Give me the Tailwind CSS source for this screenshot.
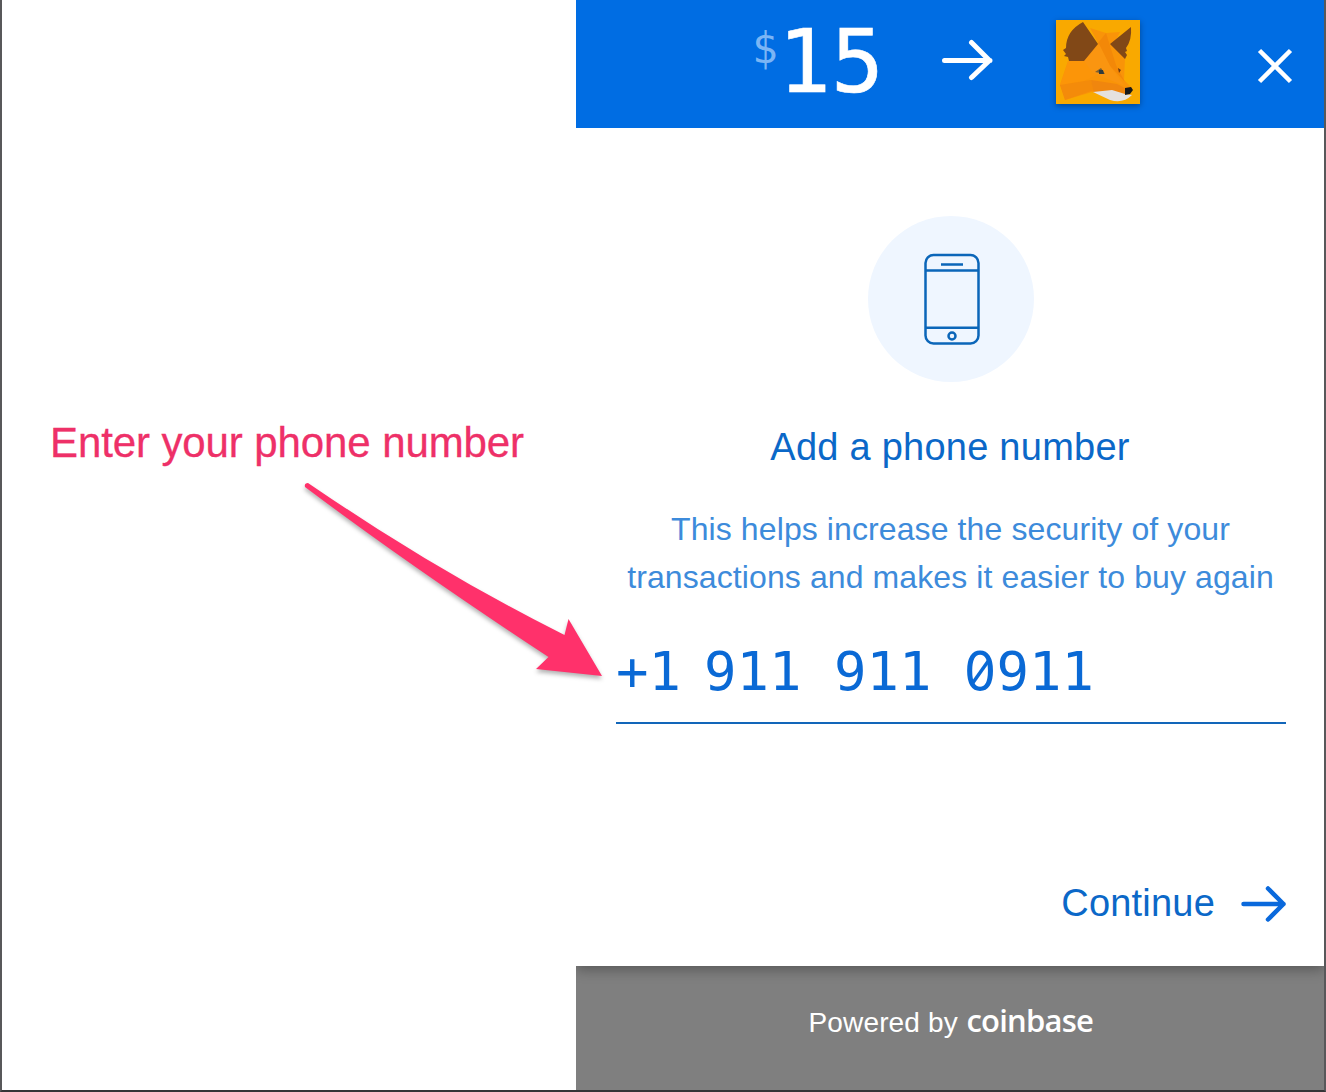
<!DOCTYPE html>
<html lang="en">
<head>
<meta charset="utf-8">
<title>Add a phone number</title>
<script src="https://cdn.jsdelivr.net/npm/@tailwindcss/browser@4"></script>
</head>
<body class="w-[1326px] h-[1092px] overflow-hidden bg-white font-['Liberation_Sans',Arial,sans-serif]">
<div class="relative flex w-full h-full border-x-2 border-b-2 border-[#58585a] border-b-[#353537]">
  <aside class="w-[574px] shrink-0 pt-[419px] pl-[48px]">
    <p class="text-[42px] leading-[48px] tracking-[-0.1px] text-[#ee3068] whitespace-nowrap [-webkit-text-stroke:0.3px_#ee3068]">Enter your phone number</p>
  </aside>

  <main class="flex flex-col w-[748px] shrink-0 bg-[#7f7f7f] overflow-hidden">
    <header class="relative z-10 flex h-32 shrink-0 bg-[#006de3] text-white font-['DejaVu_Sans_Mono',monospace]">
      <span class="w-[26px] ml-[176px] mt-[22px] text-[43px] leading-[52px] text-[#7bb5f5]">$</span>
      <span class="w-[106px] mt-[10px] text-[88px] leading-[104px] [-webkit-text-stroke:0.6px_white]">15</span>
      <svg class="ml-[57px] mt-[39px] w-[54px] h-[44px] shrink-0" viewBox="0 0 54 44" fill="none" stroke="currentColor" stroke-width="5" stroke-linecap="round" stroke-linejoin="round"><path d="M3.500 21.500H49M30.500 3.500L48.500 21.500L30.500 38.500"/></svg>
      <svg class="ml-[61px] mt-5 w-[84px] h-[84px] shrink-0 shadow-[0_2px_6px_rgba(0,0,0,0.35)]" viewBox="0 0 84 84">
        <path fill="#f9a900" d="M0 0h84v84H0z"/>
        <path fill="#f99408" d="M12 41L27 41L42 23L34 8L50 13L64 12L58 24L69 38L68 60L76 68L72 77L36 72L9 80L4 65Z"/>
        <path fill="#fc9508" d="M12 41L30 41L41 55L28 61L4 65Z"/>
        <path fill="#f38808" d="M42 23L50 13L60 45L69 62L54 46Z"/>
        <path fill="#fa9510" d="M28 41L43 24L54 46L69 66L54 60L37 53Z"/>
        <path fill="#f48b0a" d="M4 65L35 60L38 70L9 80Z"/>
        <path fill="#f0860e" d="M35 60L61 64L69 68L70 75L38 73Z"/>
        <path fill="#814817" d="M27 2L42 24L28 41L13 41L12 37L8 36L10 34L7 30L10 28Q10 11 27 2Z"/>
        <path fill="#814817" d="M75 7Q76 20 70 28L71 31L69 32L71 35L69 39L54 24Z"/>
        <path fill="#e5e1df" d="M37 72L56 70L69 74L76 75Q67 84 54 80Z"/>
        <path fill="#7b6035" d="M39 52L45 48L49 54Z"/><path fill="#303b3e" d="M43 50h4l1 4h-5z"/>
        <path fill="#6e3a12" d="M62 48l3 2-2 3z"/>
        <path fill="#17181a" d="M69 68L75 67L77 70L74 74L69 75Z"/>
      </svg>
      <svg class="ml-[117px] mt-[48px] w-[36px] h-[36px] shrink-0" viewBox="0 0 36 36" fill="none" stroke="currentColor" stroke-width="4.500"><path d="M2.500 2.500L33.500 33.500M33.500 2.500L2.500 33.500"/></svg>
    </header>

    <section class="relative flex flex-col h-[838px] shrink-0 bg-white pl-10 pr-[38px] text-[#0b68c8] shadow-[0_4px_12px_rgba(0,0,0,0.3)]">
      <div class="flex items-center justify-center mt-[88px] ml-[252px] w-[166px] h-[166px] pl-[2px] rounded-full bg-[#eff6ff]">
        <svg class="w-[58px] h-[94px]" viewBox="0 0 58 94" fill="none" stroke="#0b66b9" stroke-width="2.500"><rect x="2.500" y="3" width="53" height="88.500" rx="8"/><path d="M2.500 18.500h53M2.500 75.800h53M18 12.500h22"/><circle cx="29" cy="84" r="3.500"/></svg>
      </div>
      <h1 class="mt-[43px] -ml-[42px] -mr-10 text-center text-[38px] leading-[44px] tracking-[0.25px]">Add a phone number</h1>
      <p class="mt-[36px] -ml-[41px] -mr-10 text-center text-[32px] leading-[48px] tracking-[0.1px] whitespace-nowrap text-[#3d8bdb]">This helps increase the security of your<br>transactions and makes it easier to buy again</p>
      <div class="flex mt-[28px] h-[95px] pt-[11px] border-b-2 border-[#1266b9] text-[54px] leading-[64px] text-[#0a69d5] font-['DejaVu_Sans_Mono',monospace] whitespace-pre">
        <span class="w-[88px]">+1</span><span>911 911 </span><span class="relative flex w-[32.5px] justify-center font-['DejaVu_Sans',sans-serif]"><span class="scale-x-95">0</span><svg class="absolute left-0 top-0 w-[33px] h-[64px]" viewBox="0 0 33 64" fill="none" stroke="currentColor" stroke-width="3.500"><path d="M8 44L25 20"/></svg></span><span>911</span>
      </div>
      <div class="flex mt-[157px] justify-end text-[38px] leading-[44px] tracking-[0.2px]">
        <span>Continue</span>
        <svg class="ml-[25px] -mr-px mt-[3px] w-[47px] h-[40px]" viewBox="0 0 47 40" fill="none" stroke="#0a69dc" stroke-width="4.500" stroke-linecap="round" stroke-linejoin="round"><path d="M3.500 20H43.500M28 4.500L43.500 20L28 35.500"/></svg>
      </div>
    </section>

    <footer class="flex pt-[39px] pl-[232.5px] text-white whitespace-nowrap">
      <span class="w-[158px] text-[28px] leading-[36px] tracking-[0.15px]">Powered by</span>
      <span class="font-['Open_Sans',sans-serif] font-semibold text-[31px] leading-[36px] -mt-[3px] tracking-[-0.8px]">coinbase</span>
    </footer>
  </main>

  <svg class="absolute left-[286px] top-[470px] w-[330px] h-[222px] drop-shadow-[0_3px_2px_rgba(0,0,0,0.3)]" viewBox="0 0 330 222"><path fill="#ff316b" d="M20 13Q16 13 17 17Q125 98 260.500 187L248 199L314 206L280.500 149L276.500 165Q150 102 20 13Z"/></svg>
</div>
</body>
</html>
